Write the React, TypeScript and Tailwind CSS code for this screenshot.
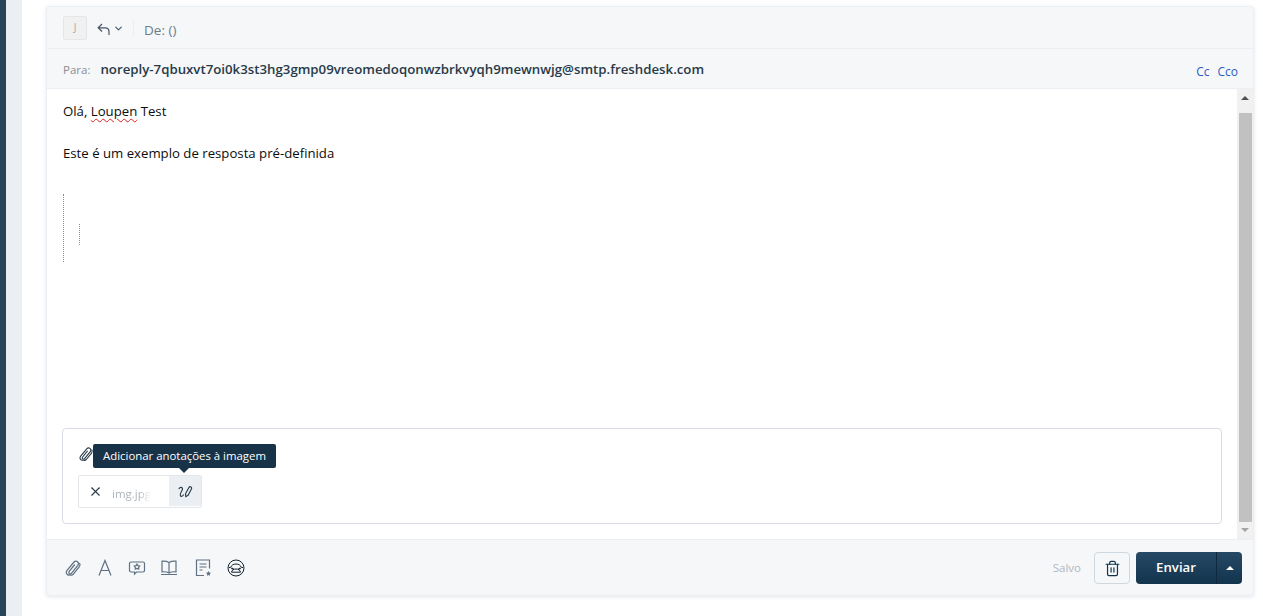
import { ChevronDown, X, Trash2 } from "lucide-react";

const font = "font-['Open_Sans','Noto_Sans',sans-serif]";

function Clip({ className }: { className: string }) {
  return (
    <svg viewBox="0 0 16 16" fill="none" stroke="currentColor" strokeWidth="1.1" className={className}>
      <path d="M5.2 14.2c-1.5.4-3-.6-3.2-2-.1-.8.2-1.5.7-2.1l6-7.2c.9-1 2.3-1.3 3.3-.5s1.1 2.200.3 3.300l-5.700 7c-.5.6-1.300.7-1.900.2s-.6-1.300-.1-1.900l5-6.100" />
      <path d="M13.800 3.500c.7 1.200.5 2.600-.3 3.600l-5.200 6.400c-.7.700-1.900 1-3.100.7" />
    </svg>
  );
}

function ToolbarIcons() {
  return (
    <div className="flex items-center gap-[14px] text-[#5f7182]">
      <Clip className="w-[18px] h-[18px]" />
      <svg viewBox="0 0 18 18" fill="none" stroke="currentColor" strokeWidth="1.200" className="w-[18px] h-[18px]">
        <path d="M3 16.500 9 1.500l6 15M5 11.500h8" />
      </svg>
      <svg viewBox="0 0 18 18" fill="none" stroke="currentColor" strokeWidth="1.200" className="w-[18px] h-[18px]">
        <path d="M3 3h12a1.500 1.500 0 0 1 1.500 1.500v7A1.500 1.500 0 0 1 15 13H8.500L6.500 15V13H3a1.500 1.500 0 0 1-1.500-1.500v-7A1.500 1.500 0 0 1 3 3Z" />
        <path d="m9 5.200 1 1.500 1.700.4-1.100 1.300.1 1.700L9 9.500l-1.700.6.100-1.700-1.100-1.300 1.700-.4Z" />
      </svg>
      <svg viewBox="0 0 18 18" fill="none" stroke="currentColor" strokeWidth="1.200" className="w-[18px] h-[18px]">
        <path d="M9 3.500C7.500 2.500 5 2 2 2.200v10.600c3-.2 5.500.2 7 1.200 1.500-1 4-1.400 7-1.200V2.200C13 2 10.500 2.500 9 3.500Zm0 0V14M1 15.500h16" />
      </svg>
      <svg viewBox="0 0 18 20" fill="none" stroke="currentColor" strokeWidth="1.200" className="w-[18px] h-[20px] ml-[2px]">
        <path d="M10 17.500H2.500V2h13v8.500M5.500 6h7M5.500 9h7M5.500 12h3" />
        <path d="m14.500 13 .8 1.600 1.700.2-1.200 1.200.3 1.700-1.600-.8-1.600.8.300-1.700-1.200-1.200 1.700-.2Z" fill="currentColor" stroke="none" />
      </svg>
      <svg viewBox="0 0 18 18" fill="none" stroke="#12212e" strokeWidth="1" className="w-[18px] h-[18px] ml-[1px]">
        <circle cx="9" cy="9" r="8" />
        <path d="M2 8.500h1.500C4.500 6.200 6.400 5 9 5s4.500 1.200 5.500 3.500H16" />
        <path d="M4.500 13.200C5 11.200 6.600 10 9 10s4 1.200 4.500 3.200H4.500Z" />
        <path d="M4.500 8.800c.4 1 1.200 1.400 2.300 1.200M13.500 8.800c-.4 1-1.200 1.400-2.300 1.200" strokeWidth="1.500" />
      </svg>
    </div>
  );
}

export default function App() {
  return (
    <div className={`${font} w-[1263px] h-[616px] overflow-hidden flex bg-white`}>
      <div className="w-[6px] bg-[#264559] shrink-0" />
      <div className="w-[16px] bg-[#ebeff3] shrink-0" />
      <div className="w-[24px] shrink-0" />

      <div className="w-[1208px] h-[590px] mt-[6px] flex flex-col rounded-[4px] border border-[#ebeff3] bg-[#f5f7f9] shadow-[0_1px_4px_rgba(18,52,77,0.12)]">
        {/* de */}
        <div className="h-[42px] flex items-center pl-[16px] border-b border-[#ebeff3] shrink-0">
          <div className="w-[24px] h-[24px] rounded-[2px] border border-[#e6e6e6] bg-[#f1f1f1] flex items-center justify-center text-[10px] text-[#a9a9a9]">
            J
          </div>
          <svg viewBox="0 0 14 14" fill="none" stroke="#475867" strokeWidth="1.200" className="w-[14px] h-[14px] ml-[10px] mt-[2px]">
            <path d="M5 2 1.200 5.800 5 9.500M1.200 5.800h7c2.500 0 3.800 1.500 3.800 4V13" />
          </svg>
          <ChevronDown className="w-[11px] h-[11px] ml-[2px] mt-[2px] text-[#475867]" strokeWidth={2.500} />
          <div className="w-px h-[16px] bg-[#ebeff3] ml-[9px]" />
          <span className="ml-[10px] mt-[5px] text-[13.500px] text-[#6f7c87]">De: ()</span>
        </div>

        {/* para */}
        <div className="h-[40px] flex items-center pl-[16px] pr-[15px] border-b border-[#ebeff3] shrink-0">
          <span className="text-[11.500px] text-[#8a8f94] pt-[3px]">Para:</span>
          <span className="ml-[10px] text-[13.260px] font-semibold text-[#283a48] pt-[3px]">
            noreply-7qbuxvt7oi0k3st3hg3gmp09vreomedoqonwzbrkvyqh9mewnwjg@smtp.freshdesk.com
          </span>
          <div className="ml-auto flex gap-[8px] text-[12px] text-[#2c5cc5] pt-[6px]">
            <span>Cc</span>
            <span>Cco</span>
          </div>
        </div>

        {/* editor */}
        <div className="h-[450px] flex bg-white shrink-0">
          <div className="flex-1 pl-[16px] pr-[16px] pt-[13px] pb-[15px] flex flex-col text-[13.200px] text-[#0c0c0c]">
            <p className="leading-[18px]">
              Olá,{" "}
              <span className="underline decoration-wavy decoration-[#e02020] decoration-1 underline-offset-2">Loupen</span>{" "}
              Test
            </p>
            <p className="leading-[18px] mt-[24px]">Este é um exemplo de resposta pré-definida</p>
            <div className="mt-[32px] h-[68px] border-l border-dotted border-[#8d8d8d] pl-[15px] pt-[30px]">
              <div className="h-[21px] border-l border-dotted border-[#8d8d8d]" />
            </div>

            {/* anexos */}
            <div className="mt-auto h-[96px] -ml-px -mr-px rounded-[4px] border border-[#d7dde3] pl-[15px] pt-[15px] relative">
              <Clip className="w-[16px] h-[16px] text-[#283a48] mt-[2px]" />
              <div className="mt-[13px] w-[124px] h-[33px] flex items-stretch rounded-[2px] border border-[#e3e7eb] bg-white">
                <div className="flex items-center flex-1 pl-[9px]">
                  <X className="w-[15px] h-[15px] text-[#283a48]" strokeWidth={1.700} />
                  <span className="ml-[9px] mt-[4px] text-[11.500px] bg-gradient-to-r from-[#a9b0b6] from-70% to-white bg-clip-text text-transparent">
                    img.jpg
                  </span>
                </div>
                <div className="w-[32px] h-[30px] bg-[#ebeff3] flex items-center justify-center">
                  <svg viewBox="0 0 16 16" fill="none" stroke="#283a48" strokeWidth="1.200" className="w-[15px] h-[15px]">
                    <path d="M1 5.500C1.300 3.800 3.300 3 4.500 4.200c1 1.100-.2 3-1.300 4.800-1 1.700-1.200 4 .3 4.200 1 .1 2-.8 2.700-2" />
                    <path d="m8.300 13.500-.3-3 3.500-6.600c.5-.9 1.500-1.200 2.300-.8s1 1.400.5 2.300L10.800 12Z" />
                  </svg>
                </div>
              </div>

              {/* tooltip */}
              <div className="absolute left-[30px] top-[15px] h-[24px] px-[10px] flex items-center rounded-[2px] bg-[#183247] text-[11.400px] text-white whitespace-nowrap">
                Adicionar anotações à imagem
                <div className="absolute left-[86px] -bottom-[5px] w-0 h-0 border-x-[5px] border-x-transparent border-t-[5px] border-t-[#183247]" />
              </div>
            </div>
          </div>

          {/* scrollbar */}
          <div className="w-[16px] bg-[#f1f1f1] flex flex-col items-center shrink-0">
            <div className="h-[24px] pt-[7px] flex justify-center">
              <div className="w-0 h-0 border-x-[4px] border-x-transparent border-b-[4px] border-b-[#505050]" />
            </div>
            <div className="w-[13px] flex-1 bg-[#c1c1c1]" />
            <div className="h-[17px] pt-[6px] flex justify-center">
              <div className="w-0 h-0 border-x-[4px] border-x-transparent border-t-[4px] border-t-[#a3a3a3]" />
            </div>
          </div>
        </div>

        {/* rodape */}
        <div className="flex-1 border-t border-[#ebeff3] flex items-center pl-[17px] pr-[11px] pt-[1px]">
          <ToolbarIcons />
          <span className="ml-auto text-[11.500px] text-[#b0b8c0]">Salvo</span>
          <button className="ml-[13px] w-[36px] h-[32px] rounded-[4px] border border-[#cfd7df] bg-[#f5f7f9] flex items-center justify-center">
            <Trash2 className="w-[17px] h-[17px] text-[#12344d]" strokeWidth={1.700} />
          </button>
          <div className="ml-[6px] h-[32px] flex rounded-[4px] overflow-hidden bg-gradient-to-b from-[#264966] to-[#12344d] text-white">
            <button className="w-[81px] text-[13.200px] font-semibold border-r border-[#0f2a3f]">Enviar</button>
            <button className="w-[25px] flex items-center justify-center">
              <div className="w-0 h-0 border-x-[4px] border-x-transparent border-b-[4px] border-b-white" />
            </button>
          </div>
        </div>
      </div>
    </div>
  );
}
